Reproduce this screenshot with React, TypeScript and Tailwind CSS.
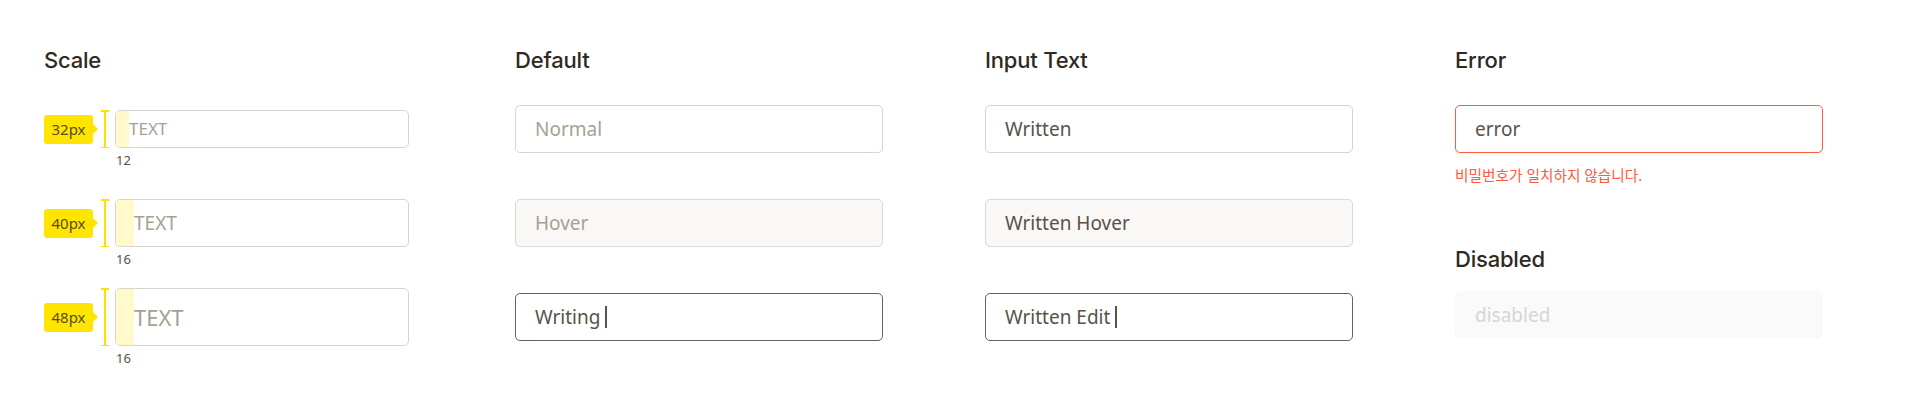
import type { ReactNode } from "react";

const body = "font-['Noto_Sans','Noto_Sans_CJK_KR',sans-serif]";
const heading =
  "font-['Inter','Noto_Sans',sans-serif] text-[22px] leading-[32px] font-medium text-[#2f2923] tracking-[-0.2px]";

function Title({ children }: { children: ReactNode }) {
  return <h2 className={heading}>{children}</h2>;
}

function Caret() {
  return <span className="ml-[5px] inline-block h-[22px] w-[1.5px] bg-[#5b5148]" />;
}

type FieldProps = {
  children: ReactNode;
  variant?: "normal" | "hover" | "focus" | "error" | "disabled";
  muted?: boolean;
};

function Field({ children, variant = "normal", muted = false }: FieldProps) {
  const box = {
    normal: "bg-white border-[#d9d4ce]",
    hover: "bg-[#f9f8f6] border-[#dcd8d2]",
    focus: "bg-white border-[#6b6158]",
    error: "bg-white border-[#ff5a3c]",
    disabled: "bg-[#fafafa] border-[#fafafa]",
  }[variant];
  const text =
    variant === "disabled"
      ? "text-[#d8d5d1]"
      : muted
        ? "text-[#a89f94]"
        : "text-[#5b5148]";
  return (
    <div
      className={`flex h-[48px] w-[368px] items-center rounded-[5px] border-[1.5px] px-[19px] text-[19px] ${box} ${text}`}
    >
      {children}
    </div>
  );
}

const scaleRows = [
  { label: "32px", h: "h-[38px]", pad: "w-[13px]", size: "text-[17px]", note: "12" },
  { label: "40px", h: "h-[48px]", pad: "w-[18px]", size: "text-[19px]", note: "16" },
  { label: "48px", h: "h-[58px]", pad: "w-[18px]", size: "text-[22px]", note: "16" },
];

function ScaleRow({ row }: { row: (typeof scaleRows)[number] }) {
  return (
    <div className="flex h-[58px] items-center">
      <div className="relative flex h-[29px] w-[49px] items-center justify-center rounded-[3px] bg-[#ffe500] text-[15px] text-[#5a4c12]">
        {row.label}
        <span className="absolute -right-[5px] top-1/2 h-0 w-0 -translate-y-1/2 border-y-[5px] border-l-[5px] border-y-transparent border-l-[#ffe500]" />
      </div>
      {/* height bracket */}
      <div className={`ml-[8px] flex ${row.h} w-[8px] flex-col items-center justify-between`}>
        <span className="h-[1.5px] w-[8px] bg-[#ffe000]" />
        <span className="w-[1.5px] flex-1 bg-[#ffe000]" />
        <span className="h-[1.5px] w-[8px] bg-[#ffe000]" />
      </div>
      <div className="relative ml-[6px]">
        <div
          className={`flex ${row.h} w-[294px] items-center overflow-hidden rounded-[5px] border-[1.5px] border-[#d9d4ce] bg-white`}
        >
          <div className={`h-full ${row.pad} bg-[#fff9cc]`} />
          <span className={`${row.size} text-[#a89f94]`}>TEXT</span>
        </div>
        <span className="absolute left-[1px] top-full mt-[3px] text-[13px] leading-[18px] text-[#5b5148]">
          {row.note}
        </span>
      </div>
    </div>
  );
}

export default function App() {
  return (
    <div className={`flex min-h-[409px] bg-white pl-[44px] pt-[44px] ${body}`}>
      <section className="w-[471px]">
        <Title>Scale</Title>
        <div className="mt-[24px] flex flex-col gap-[36px]">
          {scaleRows.map((row) => (
            <ScaleRow key={row.label} row={row} />
          ))}
        </div>
      </section>

      <section className="w-[470px]">
        <Title>Default</Title>
        <div className="mt-[24px] flex flex-col gap-[36px]">
          <div className="flex h-[58px] items-center">
            <Field muted>Normal</Field>
          </div>
          <div className="flex h-[58px] items-center">
            <Field variant="hover" muted>
              Hover
            </Field>
          </div>
          <div className="flex h-[58px] items-center">
            <Field variant="focus">
              Writing
              <Caret />
            </Field>
          </div>
        </div>
      </section>

      <section className="w-[470px]">
        <Title>Input Text</Title>
        <div className="mt-[24px] flex flex-col gap-[36px]">
          <div className="flex h-[58px] items-center">
            <Field>Written</Field>
          </div>
          <div className="flex h-[58px] items-center">
            <Field variant="hover">Written Hover</Field>
          </div>
          <div className="flex h-[58px] items-center">
            <Field variant="focus">
              Written Edit
              <Caret />
            </Field>
          </div>
        </div>
      </section>

      <section className="w-[400px]">
        <Title>Error</Title>
        <div className="mt-[29px]">
          <Field variant="error">error</Field>
        </div>
        <p className="mt-[12px] text-[14.7px] leading-[20px] text-[#ff5a3c]">
          비밀번호가 일치하지 않습니다.
        </p>
        <div className="mt-[58px]">
          <Title>Disabled</Title>
        </div>
        <div className="mt-[16px]">
          <Field variant="disabled">disabled</Field>
        </div>
      </section>
    </div>
  );
}
